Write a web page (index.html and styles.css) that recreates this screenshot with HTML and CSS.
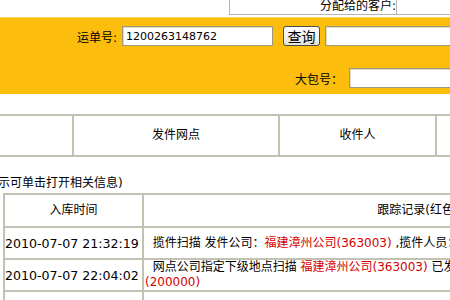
FILE: index.html
```html
<!DOCTYPE html>
<html lang="zh-CN">
<head>
    <meta charset="UTF-8">
    <title>运单查询</title>
    <link rel="stylesheet" href="styles.css">
</head>
<body>
<div class="page">
    <div class="assign-row">
        <div class="assign">
            <span class="assign-label">分配给的客户:</span>
            <input class="assign-input">
        </div>
    </div>
    <form class="search">
        <div class="search-row">
            <label class="label waybill-label" for="waybill">运单号:</label>
            <input class="field waybill" id="waybill" value="1200263148762">
            <button class="query" type="button">查询</button>
            <input class="field wide">
        </div>
        <div class="search-row bag-row">
            <label class="label bag-label" for="bag">大包号：</label>
            <input class="field wide" id="bag">
        </div>
    </form>
    <table class="summary">
        <tr>
            <td class="c0">寄件日期</td>
            <td class="c1">发件网点</td>
            <td class="c2">收件人</td>
            <td class="c3">签收状态</td>
        </tr>
    </table>
    <p class="hint">红色表示可单击打开相关信息)</p>
    <table class="track">
        <tr class="head">
            <td class="time">入库时间</td>
            <td class="record">跟踪记录(红色链接)</td>
        </tr>
        <tr>
            <td class="time">2010-07-07 21:32:19</td>
            <td class="record">&nbsp;&nbsp;揽件扫描 发件公司：<a class="link">福建漳州公司(363003)</a> ,揽件人员：林小明</td>
        </tr>
        <tr>
            <td class="time">2010-07-07 22:04:02</td>
            <td class="record">&nbsp;&nbsp;网点公司指定下级地点扫描 <a class="link">福建漳州公司(363003)</a> 已发往 下一站 <a class="link">上海市浦东新区国际航空转运中心<wbr>(200000)</a></td>
        </tr>
        <tr>
            <td class="time">2010-07-08 06:15:40</td>
            <td class="record">&nbsp;&nbsp;到件扫描 <a class="link">上海转运中心(200000)</a></td>
        </tr>
    </table>
</div>
</body>
</html>
```

FILE: styles.css
```css
html, body {
    margin: 0;
    overflow: hidden;
}

body {
    font-family: "DejaVu Sans", "Noto Sans CJK SC", sans-serif;
    font-size: 12px;
    color: #000;
    background-color: #fff;
}

.page {
    width: 900px;
}

.assign-row {
    height: 17px;
}

.assign {
    display: flex;
    box-sizing: border-box;
    margin-left: 229px;
    width: 500px;
    height: 15px;
    border-left: 1px solid #b4b4b4;
    border-bottom: 1px solid #b4b4b4;
}

.assign-label {
    width: 166px;
    text-align: right;
    line-height: 13px;
}

.assign-input {
    box-sizing: border-box;
    width: 200px;
    height: 14px;
    margin: 0;
    border: 1px solid #b4b4b4;
    border-top: none;
    border-bottom: none;
    padding: 0;
}

.search {
    margin: 0;
    box-sizing: border-box;
    height: 77px;
    padding-top: 8px;
    background-color: #fdbd0d;
    border-top: 1px solid #fdd46a;
}

.search-row {
    display: flex;
    align-items: center;
    height: 20px;
}

.bag-row {
    margin-top: 22px;
}

.label {
    font-size: 12px;
    text-align: right;
    color: #000;
}

.waybill-label {
    width: 117px;
    margin-right: 5px;
}

.bag-label {
    width: 343px;
    margin-right: 6px;
}

.field {
    box-sizing: border-box;
    height: 20px;
    margin: 0;
    padding: 0 3px;
    border: 1px solid #9c9878;
    box-shadow: inset 1px 1px 0 #dedbc6;
    background: #fff;
    font-family: "DejaVu Sans", sans-serif;
    font-size: 11px;
}

.waybill {
    width: 151px;
}

.wide {
    width: 300px;
}

.query {
    box-sizing: border-box;
    width: 37px;
    height: 20px;
    margin: 0 5px 0 10px;
    padding: 0;
    border: 1px solid #4a4a4a;
    border-radius: 3px;
    background: linear-gradient(#ffffff, #e4e4dc);
    font-family: "Noto Sans CJK SC", sans-serif;
    font-size: 14px;
    line-height: 16px;
}

/* tables: separate borders so every line sits on a known pixel */
.summary, .track {
    border-collapse: separate;
    border-spacing: 0;
    table-layout: fixed;
    border-top: 2px solid #c2c2b2;
    border-left: 2px solid #c2c2b2;
}

.summary td, .track td {
    box-sizing: border-box;
    border-right: 2px solid #c2c2b2;
    border-bottom: 2px solid #c2c2b2;
}

.summary {
    margin: 20px 0 0 -200px;
    width: 837px;
}

.summary td {
    height: 41px;
    padding: 0 0 4px;
    text-align: center;
}

.summary .c0 { width: 272px; }
.summary .c1 { width: 206px; }
.summary .c2 { width: 157px; }
.summary .c3 { width: 200px; }

.hint {
    margin: 19px 0 3px -38px;
    line-height: 14px;
}

.track {
    margin-left: 3px;
    width: 715px;
}

.track td {
    height: 32px;
    padding: 0 0 0 1px;
    line-height: 15px;
}

.track .time {
    width: 139px;
    padding-left: 0;
    white-space: nowrap;
    font-size: 12.6px;
}

.track .record {
    width: 574px;
}

.track .head td {
    height: 33px;
    padding: 0;
    text-align: center;
    font-size: 12px;
}

.link {
    color: #d40000;
}
```
